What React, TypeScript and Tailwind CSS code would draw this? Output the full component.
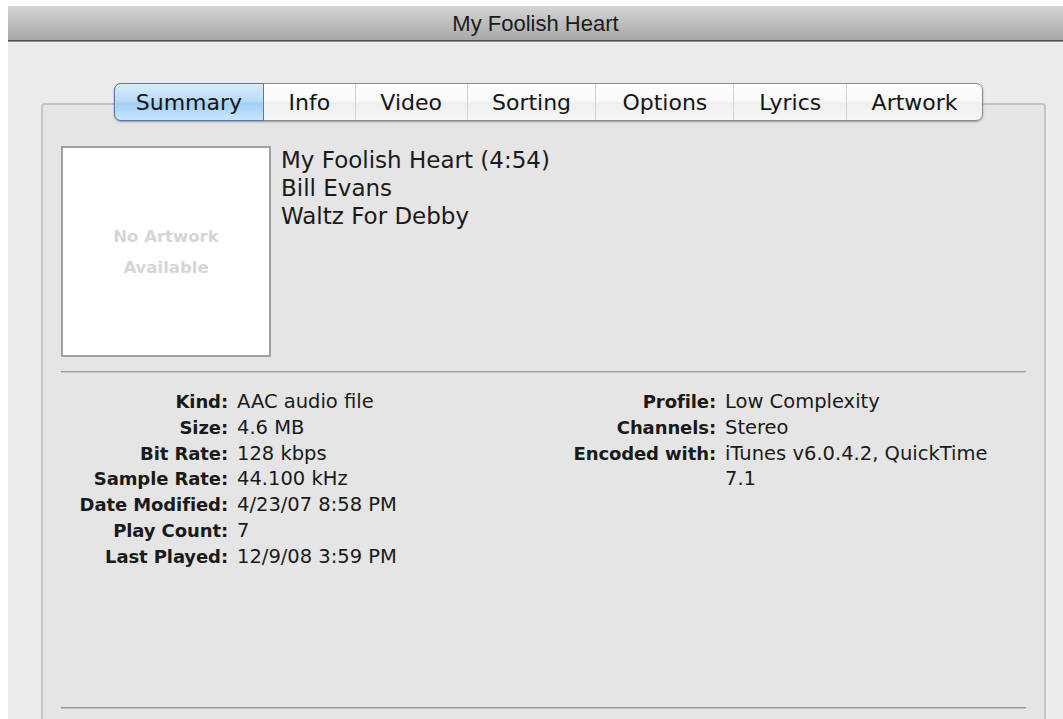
import React from "react";

type Tab = { label: string; width: string; active?: boolean };

const tabs: Tab[] = [
  { label: "Summary", width: "w-[150px]", active: true },
  { label: "Info", width: "w-[91px]" },
  { label: "Video", width: "w-[112px]" },
  { label: "Sorting", width: "w-[129px]" },
  { label: "Options", width: "w-[138px]" },
  { label: "Lyrics", width: "w-[113px]" },
  { label: "Artwork", width: "w-[136px]" },
];

const leftInfo: [string, string][] = [
  ["Kind:", "AAC audio file"],
  ["Size:", "4.6 MB"],
  ["Bit Rate:", "128 kbps"],
  ["Sample Rate:", "44.100 kHz"],
  ["Date Modified:", "4/23/07 8:58 PM"],
  ["Play Count:", "7"],
  ["Last Played:", "12/9/08 3:59 PM"],
];

function TabStrip() {
  return (
    <div className="relative z-10 ml-[73px] flex h-[38px] w-[869px] rounded-[7px] border border-[#8b8b8b] bg-[linear-gradient(to_bottom,#ffffff_0%,#f8f8f8_50%,#eeeeee_51%,#f7f7f7_100%)] shadow-[0_1px_2px_rgba(0,0,0,0.35)]">
      {tabs.map((t, i) =>
        t.active ? (
          <div
            key={t.label}
            className={`${t.width} -my-px -ml-px flex items-center justify-center rounded-l-[7px] border border-[#5877b0] bg-[linear-gradient(to_bottom,#d9ecfd_0%,#bcdcf9_45%,#a2cef7_55%,#cbe7fe_100%)] text-[22px] text-[#151515]`}
          >
            {t.label}
          </div>
        ) : (
          <div
            key={t.label}
            className={`${t.width} flex items-center justify-center text-[22px] text-[#151515] ${
              i > 1 ? "border-l border-[#d3d3d3]" : ""
            }`}
          >
            {t.label}
          </div>
        )
      )}
    </div>
  );
}

export default function App() {
  return (
    <div className="flex h-[719px] w-[1063px] flex-col overflow-hidden bg-white pl-[8px] pt-[6px] font-['DejaVu_Sans',sans-serif]">
      {/* window title bar */}
      <div className="flex h-[34px] shrink-0 items-center justify-center bg-[linear-gradient(to_bottom,#d4d4d4,#a8a8a8)] font-['Liberation_Sans',sans-serif] text-[22px] text-[#1a1a1a]">
        My Foolish Heart
      </div>
      <div className="h-px shrink-0 bg-[#4d4d4d]" />
      <div className="h-px shrink-0 bg-[#8e8e8e]" />

      {/* window body */}
      <div className="flex flex-1 flex-col bg-[#ececec] pl-[33px] pt-[41px]">
        <TabStrip />
        <div className="-mt-[18px] flex w-[1005px] flex-1 flex-col rounded-t-[4px] border-2 border-b-0 border-[#c4c4c4] bg-[#e5e5e5] px-[18px] pt-[41px]">
          {/* artwork + track header */}
          <div className="flex gap-[10px]">
            <div className="flex h-[211px] w-[210px] flex-col items-center justify-center border-2 border-[#a1a1a1] bg-white text-[16.5px] font-bold leading-[31px] text-[#d6d6d6]">
              <span>No Artwork</span>
              <span>Available</span>
            </div>
            <div className="flex flex-col text-[23px] leading-[28px] text-[#1a1a1a]">
              <span>My Foolish Heart (4:54)</span>
              <span>Bill Evans</span>
              <span>Waltz For Debby</span>
            </div>
          </div>

          <div className="mt-[14px] h-px bg-[#9f9f9f]" />
          <div className="h-px bg-[#c9c9c9]" />

          {/* file details */}
          <div className="mt-[16px] flex items-start text-[#1a1a1a]">
            <div className="grid w-[479px] grid-cols-[167px_1fr] content-start items-baseline gap-x-[9px] leading-[25.8px]">
              {leftInfo.map(([k, v]) => (
                <React.Fragment key={k}>
                  <span className="text-right text-[18px] font-bold tracking-[-0.1px]">{k}</span>
                  <span className="text-[19.5px]">{v}</span>
                </React.Fragment>
              ))}
            </div>
            <div className="grid grid-cols-[176px_auto] content-start items-baseline gap-x-[9px] leading-[25.8px]">
              <span className="text-right text-[18px] font-bold tracking-[-0.1px]">Profile:</span>
              <span className="text-[19.5px]">Low Complexity</span>
              <span className="text-right text-[18px] font-bold tracking-[-0.1px]">Channels:</span>
              <span className="text-[19.5px]">Stereo</span>
              <span className="text-right text-[18px] font-bold tracking-[-0.1px]">Encoded with:</span>
              <span className="whitespace-nowrap text-[19.5px]">
                iTunes v6.0.4.2, QuickTime
                <br />
                7.1
              </span>
            </div>
          </div>

          <div className="mt-[137px] h-px bg-[#999999]" />
          <div className="h-px bg-[#bdbdbd]" />
        </div>
      </div>
    </div>
  );
}
